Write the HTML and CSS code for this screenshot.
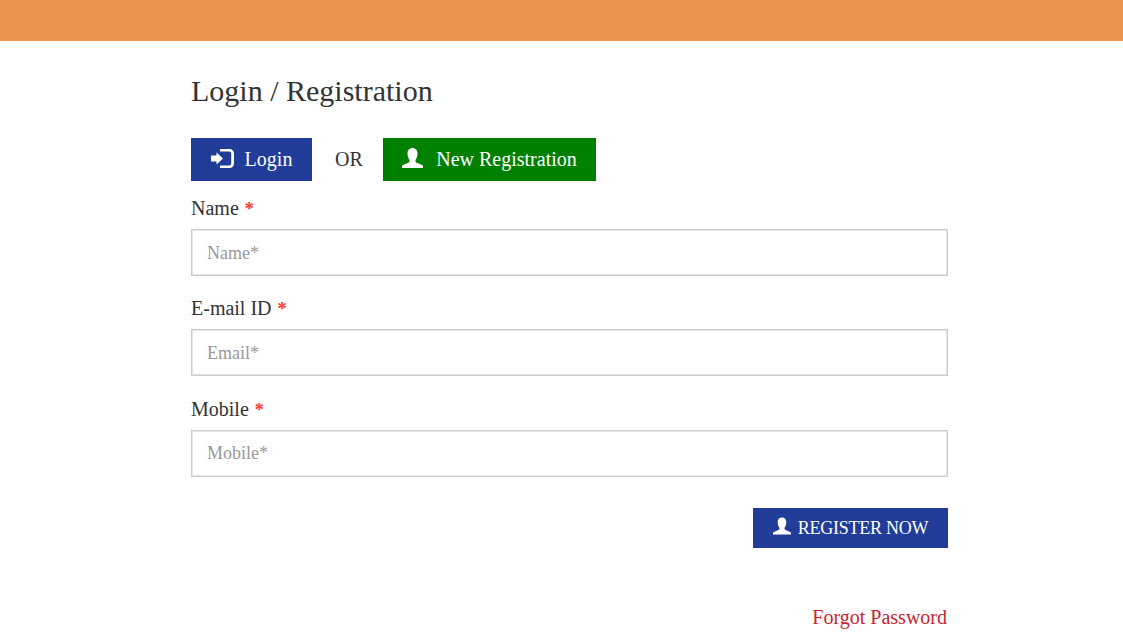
FILE: index.html
```html
<!DOCTYPE html>
<html lang="en">
<head>
  <meta charset="UTF-8">
  <title>Login / Registration</title>
  <meta name="viewport" content="width=device-width, initial-scale=1.0">
  <link rel="stylesheet" href="styles.css">
</head>
<body>
  <div class="top-bar"></div>

  <div class="container">
    <h2 class="page-title">Login / Registration</h2>

    <div class="switch-row">
      <a class="btn btn-blue btn-login" href="#">
        <svg class="icon-login" viewBox="0 0 23 19"><path d="M0 6.500h5.500V3.500L12 9.500 5.500 15.500V12.500H0z"/><path d="M9 0h9.500A4.500 4.500 0 0 1 23 4.500v10a4.500 4.500 0 0 1-4.500 4.500H9v-2.500h9a2 2 0 0 0 2.200-2V4.500a2 2 0 0 0-2.200-2H9z"/></svg>
        Login
      </a>
      <span class="or-text">OR</span>
      <a class="btn btn-green btn-new" href="#">
        <svg class="icon-user" viewBox="0 0 21 20"><path d="M10.500 0c3.200 0 5 2.400 5 5.500 0 2.800-1 5-2 6.500v1.500c0 .8 1 1.200 3 2 2.200.8 3.800 1.500 4.500 2.500v2H0v-2c.7-1 2.300-1.700 4.500-2.500 2-.8 3-1.200 3-2V12c-1-1.500-2-3.700-2-6.500C5.500 2.400 7.300 0 10.500 0z"/></svg>
        New Registration
      </a>
    </div>

    <div class="field">
      <label for="name">Name <span class="req">*</span></label>
      <input type="text" id="name" placeholder="Name*">
    </div>
    <div class="field">
      <label for="email">E-mail ID <span class="req">*</span></label>
      <input type="text" id="email" placeholder="Email*">
    </div>
    <div class="field">
      <label for="mobile">Mobile <span class="req">*</span></label>
      <input type="text" id="mobile" placeholder="Mobile*">
    </div>

    <div class="submit-row">
      <a class="btn btn-blue btn-register" href="#">
        <svg class="icon-user icon-small" viewBox="0 0 21 20"><path d="M10.500 0c3.200 0 5 2.400 5 5.500 0 2.800-1 5-2 6.500v1.500c0 .8 1 1.200 3 2 2.200.8 3.800 1.500 4.500 2.500v2H0v-2c.7-1 2.300-1.700 4.500-2.500 2-.8 3-1.200 3-2V12c-1-1.500-2-3.700-2-6.500C5.500 2.400 7.300 0 10.500 0z"/></svg>
        REGISTER NOW
      </a>
    </div>

    <div class="forgot-row">
      <a class="forgot" href="#">Forgot Password</a>
    </div>
  </div>
</body>
</html>
```

FILE: styles.css
```css
html, body {
  margin: 0;
  padding: 0;
  background: #fff;
  color: #333;
  font-family: "Liberation Serif", "Times New Roman", serif;
}
.top-bar {
  height: 41px;
  background: #eb9452;
}
.container {
  width: 757px;
  margin-left: 191px;
}
.page-title {
  margin: 0;
  padding-top: 32px;
  height: 65px;
  font-size: 30px;
  line-height: 36px;
  font-weight: 400;
}
.switch-row {
  display: flex;
  align-items: center;
  height: 43px;
}
.btn {
  display: flex;
  align-items: center;
  justify-content: center;
  box-sizing: border-box;
  color: #fff;
  font-size: 20px;
  text-decoration: none;
}
.btn-blue {
  background: #223c9a;
}
.btn-green {
  background: #008000;
}
.btn-login {
  width: 121px;
  height: 43px;
  gap: 11px;
}
.btn-new {
  width: 213px;
  height: 43px;
  gap: 13px;
}
.or-text {
  width: 71px;
  padding-left: 3px;
  box-sizing: border-box;
  text-align: center;
  font-size: 20px;
}
.icon-login {
  width: 23px;
  height: 19px;
  margin-top: -2px;
  fill: #fff;
}
.icon-user {
  width: 21px;
  height: 20px;
  fill: #fff;
  margin-top: -4px;
}
.icon-small {
  width: 18px;
  height: 18px;
}
.field {
  margin-bottom: 5.4px;
}
.field label {
  display: block;
  height: 48px;
  padding-top: 17px;
  box-sizing: border-box;
  font-size: 20px;
  line-height: 20px;
}
.req {
  margin-left: 1px;
  color: #f33;
  font-size: 18px;
  font-weight: bold;
}
.field input {
  display: block;
  box-sizing: border-box;
  width: 100%;
  height: 47px;
  padding: 1px 15px 0;
  border: 1px solid #ccc;
  box-shadow: inset 0 0 0 1px #e4e4e4;
  font-family: inherit;
  font-size: 18px;
  color: #333;
  outline: none;
}
.field input::placeholder {
  color: #999;
}
.submit-row {
  display: flex;
  justify-content: flex-end;
  margin-top: 31.6px;
}
.btn-register {
  width: 195px;
  height: 40px;
  gap: 7px;
  font-size: 18px;
  letter-spacing: -0.25px;
}
.forgot-row {
  margin-top: 58px;
  text-align: right;
  padding-right: 1px;
}
.forgot {
  color: #c9252d;
  font-size: 20px;
  line-height: 23px;
  text-decoration: none;
}
```
